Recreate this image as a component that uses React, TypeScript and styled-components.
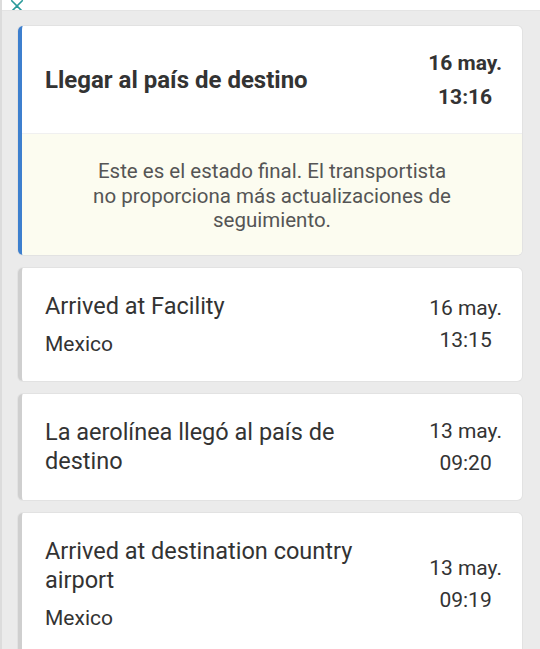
import React from "react";
import styled, { createGlobalStyle } from "styled-components";

const GlobalStyle = createGlobalStyle`
  html, body {
    margin: 0;
    padding: 0;
    background: #ebebeb;
    font-family: Roboto, "Noto Sans", sans-serif;
  }
`;

interface TrackEvent {
  title: string;
  place?: string;
  date: string;
  time: string;
}

const events: TrackEvent[] = [
  { title: "Arrived at Facility", place: "Mexico", date: "16 may.", time: "13:15" },
  { title: "La aerolínea llegó al país de destino", date: "13 may.", time: "09:20" },
  { title: "Arrived at destination country airport", place: "Mexico", date: "13 may.", time: "09:19" },
];

const App: React.FC = () => {
  return (
    <>
      <GlobalStyle />
      <Screen>
        <TopBar>
          <CloseIcon viewBox="0 0 24 24">
            <path d="M5 5 L19 19 M19 5 L5 19" />
          </CloseIcon>
        </TopBar>
        <List>
          <Card $accent="#3d7fce">
            <Head>
              <Main>
                <StatusTitle>Llegar al país de destino</StatusTitle>
              </Main>
              <When $bold>
                <span>16 may.</span>
                <span>13:16</span>
              </When>
            </Head>
            <Notice>
              Este es el estado final. El transportista no proporciona más actualizaciones de seguimiento.
            </Notice>
          </Card>
          {events.map((ev, i) => (
            <Card key={i} $accent="#cfcfcf">
              <Head $compact>
                <Main>
                  <EventTitle>{ev.title}</EventTitle>
                  {ev.place && <Place>{ev.place}</Place>}
                </Main>
                <When>
                  <span>{ev.date}</span>
                  <span>{ev.time}</span>
                </When>
              </Head>
            </Card>
          ))}
        </List>
      </Screen>
    </>
  );
};

const Screen = styled.div`
  min-height: 649px;
  background: #ebebeb;
  border-left: 2px solid #dcdcdc;
  box-sizing: border-box;
`;

const TopBar = styled.div`
  height: 10px;
  background: #ffffff;
  overflow: hidden;
  padding-left: 6px;
  border-bottom: 1px solid #e4e4e4;
`;

const CloseIcon = styled.svg`
  width: 18px;
  height: 18px;
  margin-top: -14px;
  fill: none;
  stroke: #2a9a9a;
  stroke-width: 2.2;
  stroke-linecap: round;
`;

const List = styled.div`
  display: flex;
  flex-direction: column;
  gap: 13px;
  padding: 15px 18px 0 16px;
`;

const Card = styled.div<{ $accent: string }>`
  background: #ffffff;
  border-radius: 5px;
  border-left: 4px solid ${(p) => p.$accent};
  box-shadow: 0 0 0 1px #e2e2e2;
  overflow: hidden;
`;

const Head = styled.div<{ $compact?: boolean }>`
  display: flex;
  align-items: center;
  justify-content: space-between;
  min-height: ${(p) => (p.$compact ? "auto" : "108px")};
  padding: ${(p) => (p.$compact ? "24px 20px 24px 23px" : "0 20px 0 23px")};
  border-bottom: ${(p) => (p.$compact ? "none" : "1px solid #f0f0f0")};
  box-sizing: border-box;
`;

const Main = styled.div`
  display: flex;
  flex-direction: column;
  gap: 10px;
  max-width: 340px;
`;

const StatusTitle = styled.div`
  font-size: 24px;
  font-weight: 700;
  color: #333333;
`;

const EventTitle = styled.div`
  font-size: 23.5px;
  line-height: 29px;
  color: #333333;
`;

const Place = styled.div`
  font-size: 21px;
  line-height: 26px;
  color: #333333;
`;

const When = styled.div<{ $bold?: boolean }>`
  display: flex;
  flex-direction: column;
  align-items: center;
  gap: ${(p) => (p.$bold ? "8px" : "6px")};
  font-size: 21px;
  line-height: 26px;
  font-weight: ${(p) => (p.$bold ? 700 : 400)};
  color: #333333;
`;

const Notice = styled.div`
  background: #fcfcf0;
  padding: 25px 62px 22px;
  text-align: center;
  font-size: 20.5px;
  line-height: 24.5px;
  color: #555555;
`;

export default App;
